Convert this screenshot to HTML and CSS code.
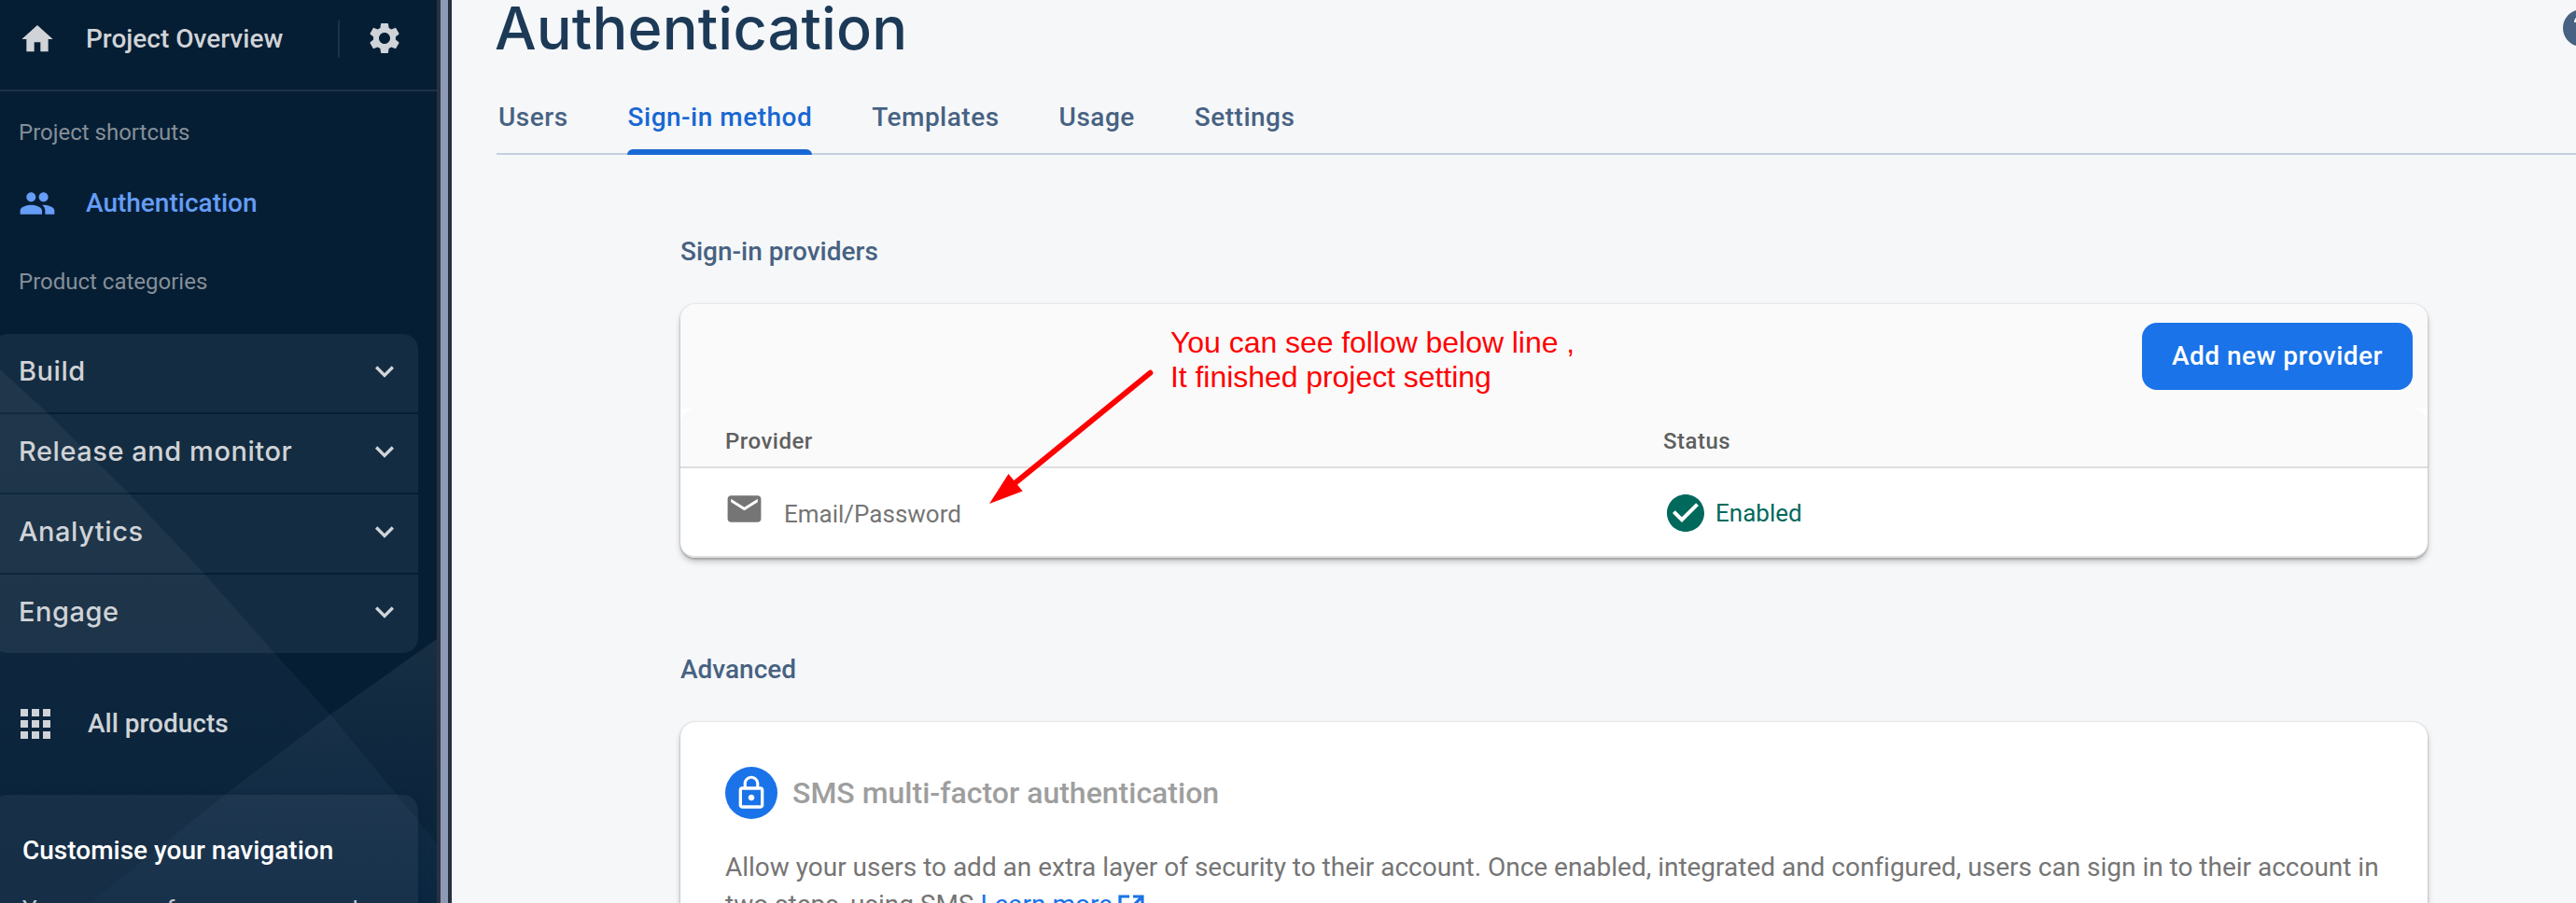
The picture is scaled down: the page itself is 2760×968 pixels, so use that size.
FILE: index.html
```html
<!DOCTYPE html>
<html lang="en-GB">
<head>
<meta charset="utf-8">
<title>Authentication</title>
<link rel="stylesheet" href="styles.css">
</head>
<body>
<div class="app">
  <aside class="sidebar">
    <svg class="facets" viewBox="0 0 468 968" aria-hidden="true">
      <defs>
        <linearGradient id="fa" x1="0" y1="396" x2="0" y2="968" gradientUnits="userSpaceOnUse"><stop offset="0" stop-color="#fff" stop-opacity=".055"/><stop offset="1" stop-color="#3d6fae" stop-opacity=".06"/></linearGradient>
        <linearGradient id="fb" x1="0" y1="685" x2="0" y2="968" gradientUnits="userSpaceOnUse"><stop offset="0" stop-color="#fff" stop-opacity=".075"/><stop offset="1" stop-color="#5b8fe0" stop-opacity=".03"/></linearGradient>
      </defs>
      <path d="M0 396L50 442L137 528L218 614L303 710L354 766L425 852L468 904V968H0z" fill="url(#fa)"/>
      <path d="M468 685L354 766L241 852L104 962L97 968H468z" fill="url(#fb)"/>
    </svg>
    <div class="overview">
      <svg class="ic" viewBox="0 0 24 24"><path d="M10 20v-6h4v6h5v-8h3L12 3 2 12h3v8z"/></svg>
      <span class="overview-name">Project Overview</span>
      <i class="vline"></i>
      <svg class="ic gear" viewBox="0 0 24 24"><path d="M19.14 12.94c.04-.3.06-.61.06-.94 0-.32-.02-.64-.07-.94l2.03-1.58c.18-.14.23-.41.12-.61l-1.92-3.32c-.12-.22-.37-.29-.59-.22l-2.39.96c-.5-.38-1.03-.7-1.62-.94l-.36-2.54c-.04-.24-.24-.41-.48-.41h-3.84c-.24 0-.43.17-.47.41l-.36 2.54c-.59.24-1.13.57-1.62.94l-2.39-.96c-.22-.08-.47 0-.59.22L2.74 8.87c-.12.21-.08.47.12.61l2.03 1.58c-.05.3-.09.63-.09.94s.02.64.07.94l-2.03 1.58c-.18.14-.23.41-.12.61l1.92 3.32c.12.22.37.29.59.22l2.39-.96c.5.38 1.03.7 1.62.94l.36 2.54c.05.24.24.41.48.41h3.84c.24 0 .44-.17.47-.41l.36-2.54c.59-.24 1.13-.56 1.62-.94l2.39.96c.22.08.47 0 .59-.22l1.92-3.32c.12-.22.07-.47-.12-.61l-2.01-1.58zM12 15.6c-1.98 0-3.6-1.62-3.6-3.6s1.62-3.6 3.6-3.6 3.6 1.62 3.6 3.6-1.62 3.6-3.6 3.6z"/></svg>
    </div>
    <div class="label first">Project shortcuts</div>
    <div class="shortcut">
      <svg class="ic" viewBox="0 0 24 24"><path d="M16 11c1.66 0 2.99-1.34 2.99-3S17.66 5 16 5c-1.66 0-3 1.34-3 3s1.34 3 3 3zm-8 0c1.66 0 2.99-1.34 2.99-3S9.66 5 8 5C6.34 5 5 6.34 5 8s1.34 3 3 3zm0 2c-2.33 0-7 1.17-7 3.5V19h14v-2.500c0-2.330-4.670-3.500-7-3.500zm8 0c-.29 0-.62.02-.97.05 1.16.84 1.970 1.970 1.970 3.450V19h6v-2.500c0-2.330-4.670-3.500-7-3.500z"/></svg>
      <span>Authentication</span>
    </div>
    <div class="label second">Product categories</div>
    <nav class="cats">
      <div class="cat"><span>Build</span><svg class="ic" viewBox="0 0 24 24"><path d="M16.590 8.590L12 13.170 7.410 8.590 6 10l6 6 6-6z"/></svg></div>
      <div class="cat"><span>Release and monitor</span><svg class="ic" viewBox="0 0 24 24"><path d="M16.590 8.590L12 13.170 7.410 8.590 6 10l6 6 6-6z"/></svg></div>
      <div class="cat"><span>Analytics</span><svg class="ic" viewBox="0 0 24 24"><path d="M16.590 8.590L12 13.170 7.410 8.590 6 10l6 6 6-6z"/></svg></div>
      <div class="cat"><span>Engage</span><svg class="ic" viewBox="0 0 24 24"><path d="M16.590 8.590L12 13.170 7.410 8.590 6 10l6 6 6-6z"/></svg></div>
    </nav>
    <div class="all">
      <svg class="apps" viewBox="0 0 32 32"><path d="M0 0h8v8H0zM12 0h8v8h-8zM24 0h8v8h-8zM0 12h8v8H0zM12 12h8v8h-8zM24 12h8v8h-8zM0 24h8v8H0zM12 24h8v8h-8zM24 24h8v8h-8z"/></svg>
      <span>All products</span>
    </div>
    <div class="promo">
      <div class="promo-title">Customise your navigation</div>
      <div class="promo-text">You can now focus your console</div>
    </div>
  </aside>
  <div class="rail"></div>
  <main class="main">
    <header class="head">
      <h1 class="title">Authentication</h1>
      <svg class="help" viewBox="0 0 24 24"><path d="M12 2C6.480 2 2 6.480 2 12s4.480 10 10 10 10-4.480 10-10S17.520 2 12 2zm1 17h-2v-2h2v2zm2.070-7.750l-.9.920C13.450 12.900 13 13.500 13 15h-2v-.5c0-1.100.45-2.100 1.170-2.830l1.240-1.260c.37-.36.59-.86.59-1.410 0-1.100-.9-2-2-2s-2 .9-2 2H8c0-2.210 1.790-4 4-4s4 1.790 4 4c0 .88-.36 1.680-.93 2.250z"/></svg>
    </header>
    <div class="tabs">
      <span class="tab">Users</span>
      <span class="tab active">Sign-in method</span>
      <span class="tab">Templates</span>
      <span class="tab">Usage</span>
      <span class="tab">Settings</span>
    </div>
    <section class="content">
      <h2 class="sec">Sign-in providers</h2>
      <div class="card providers">
        <div class="toolbar"><button class="add">Add new provider</button></div>
        <div class="row thead"><span class="col1">Provider</span><span class="col2">Status</span></div>
        <div class="row trow">
          <span class="col1 mail"><svg class="mail-ic" viewBox="0 0 24 24"><path d="M20 4H4c-1.100 0-1.990.9-1.990 2L2 18c0 1.100.9 2 2 2h16c1.100 0 2-.9 2-2V6c0-1.100-.9-2-2-2zm0 4l-8 5-8-5V6l8 5 8-5v2z"/></svg><span class="mail-t">Email/Password</span></span>
          <span class="col2 on"><svg class="ok" viewBox="0 0 24 24"><path d="M12 2C6.480 2 2 6.480 2 12s4.480 10 10 10 10-4.480 10-10S17.520 2 12 2zm-2 15l-5-5 1.410-1.410L10 14.170l7.590-7.590L19 8l-9 9z"/></svg><span class="on-t">Enabled</span></span>
        </div>
        <div class="note">You can see follow below line ,<br>It finished project setting</div>
        <svg class="arrow" viewBox="0 0 180 150"><path d="M172.300 8.700L28 126.500" stroke="#f00" stroke-width="6" stroke-linecap="round"/><path d="M0 149L20.500 117L35.700 135.500z" fill="#f00"/></svg>
      </div>
      <h2 class="sec adv">Advanced</h2>
      <div class="card mfa">
        <div class="mfa-head">
          <span class="lock"><svg viewBox="0 0 24 24"><path d="M12 17c1.100 0 2-.9 2-2s-.9-2-2-2-2 .9-2 2 .9 2 2 2zm6-9h-1V6c0-2.760-2.240-5-5-5S7 3.240 7 6v2H6c-1.100 0-2 .9-2 2v10c0 1.100.9 2 2 2h12c1.100 0 2-.9 2-2V10c0-1.100-.9-2-2-2zM8.900 6c0-1.710 1.390-3.100 3.100-3.100s3.100 1.390 3.100 3.100v2H8.900V6zM18 20H6V10h12v10z"/></svg></span>
          <span class="mfa-title">SMS multi-factor authentication</span>
        </div>
        <p class="desc">Allow your users to add an extra layer of security to their account. Once enabled, integrated and configured, users can sign in to their account in<br>two steps, using SMS <a class="link">Learn more</a><svg class="ext" viewBox="0 0 28 28"><path d="M12 2H2V26H26V16M16 2H26V12M26 2L11 17" fill="none" stroke="#1a73e8" stroke-width="3.200"/></svg></p>
      </div>
    </section>
  </main>
</div>
</body>
</html>
```
FILE: styles.css
```css
* { box-sizing: border-box; }
body { margin: 0; width: 2760px; height: 968px; overflow: hidden; font-family: Roboto, sans-serif; }
svg { display: block; flex: none; }
.app { display: flex; width: 2760px; height: 968px; overflow: hidden; background: #f6f7f9; }

.sidebar { position: relative; flex: none; width: 468px; height: 968px; overflow: hidden; background: #051e34; color: #d0d3d7; font-size: 28px; font-weight: 500; white-space: nowrap; }
.sidebar > * { position: relative; }
.sidebar > .facets { position: absolute; left: 0; top: 0; width: 468px; height: 968px; }
.ic { width: 40px; height: 40px; fill: #d0d3d7; }
.overview { display: flex; height: 98px; padding: 22px 36px 0 20px; border-bottom: 2px solid #1e3148; }
.overview-name { margin-left: 32px; width: 270px; line-height: 40px; }
.vline { width: 2px; height: 40px; background: #1e3148; }
.gear { margin: -1px 0 0 28px; }
.label { padding-left: 20px; font-size: 24px; line-height: 28px; font-weight: 400; color: #868f99; }
.first { margin-top: 30px; }
.shortcut { display: flex; gap: 32px; margin-top: 42px; padding-left: 20px; line-height: 40px; color: #669df6; }
.shortcut .ic { fill: #669df6; }
.second { margin-top: 50px; }
.cats { display: flex; flex-direction: column; gap: 2px; width: 456px; margin: 42px 0 0 -8px; border-radius: 16px; overflow: hidden; }
.cat { display: flex; justify-content: space-between; align-items: center; height: 84px; padding: 0 16px 4px 28px; background: rgba(245,235,255,.065); font-family: Inter, sans-serif; font-size: 29px; letter-spacing: .55px; }
.cat span { margin-top: -2px; }
.all { display: flex; align-items: center; gap: 40px; height: 40px; margin-top: 56px; padding-left: 22px; }
.all span { margin-top: -2px; }
.apps { width: 32px; height: 32px; fill: #d0d3d7; }
.promo { width: 456px; height: 200px; margin: 56px 0 0 -8px; padding: 46px 32px; border-radius: 16px; background: rgba(245,235,255,.06); box-shadow: 0 2px 8px rgba(0,0,0,.12); color: #fff; }
.promo-title { line-height: 28px; }
.promo-text { margin-top: 34px; font-size: 26px; line-height: 30px; font-weight: 400; color: #c3cad2; }

.rail { flex: none; width: 16px; background: #8c9ab6; border-left: 4px solid #2b3140; border-right: 4px solid #27303d; }

.main { flex: 1; min-width: 0; padding-left: 48px; }
.head { display: flex; justify-content: space-between; height: 102px; }
.title { margin: -8px 0 0 -2px; font: 500 63px/76px Inter, sans-serif; letter-spacing: .15px; color: #1c3a57; white-space: nowrap; }
.help { width: 48px; height: 48px; margin: 6px -30px 0 0; fill: #476282; }
.tabs { display: flex; gap: 64px; height: 64px; padding-left: 2px; border-bottom: 2px solid #c3d0de; }
.tab { position: relative; height: 64px; font-size: 28px; line-height: 48px; font-weight: 500; color: #476282; white-space: nowrap; letter-spacing: .5px; }
.active { color: #1967d2; }
.active::after { content: ""; position: absolute; left: -1px; right: 0; bottom: 0; height: 6px; border-radius: 6px 6px 0 0; background: #1967d2; }
.content { width: 1872px; margin: 88px 0 0 197px; }
.sec { margin: 0; font-size: 28px; line-height: 32px; font-weight: 500; color: #476282; white-space: nowrap; }
.card { position: relative; border-radius: 16px; background: #fff; box-shadow: 0 0 2px rgba(0,0,0,.2), 0 4px 6px rgba(0,0,0,.22), 0 2px 2px rgba(0,0,0,.15); }
.providers { height: 272px; margin-top: 40px; }
.toolbar { display: flex; justify-content: flex-end; height: 112px; padding: 20px 16px 0; border-radius: 16px 16px 0 0; background: #fafafa; }
.add { width: 290px; height: 72px; padding: 0; border: 0; border-radius: 16px; background: #1a73e8; color: #fff; font: 500 28px/72px Roboto, sans-serif; letter-spacing: .5px; white-space: nowrap; }
.row { display: flex; padding-left: 48px; }
.col1 { flex: none; width: 1005px; }
.thead { height: 64px; border-bottom: 2px solid #dedede; border-radius: 16px 16px 0 0; background: #fafafa; font-size: 24px; line-height: 70px; font-weight: 500; letter-spacing: .5px; color: #5f5f5f; }
.trow { height: 96px; border-bottom: 2px solid #dedede; border-radius: 0 0 16px 16px; font-size: 26px; }
.mail { display: flex; padding-top: 23px; color: #757575; line-height: 52px; }
.mail-ic { width: 43px; height: 43px; margin: -1px 0 0 -1px; fill: #757575; }
.mail-t { margin-left: 21px; }
.on { display: flex; color: #00695c; line-height: 50px; padding-top: 23px; }
.ok { width: 48px; height: 48px; margin-top: 1px; fill: #00695c; }
.on-t { margin-left: 8px; }
.note { position: absolute; left: 525px; top: 23px; color: #f00; font: 32px/37px "Liberation Sans", sans-serif; letter-spacing: -.05px; white-space: nowrap; }
.arrow { position: absolute; left: 331px; top: 65px; width: 180px; height: 150px; fill: none; }
.adv { margin-top: 104px; }
.mfa { height: 300px; margin-top: 40px; padding: 48px; }
.mfa-head { display: flex; align-items: center; gap: 16px; height: 56px; }
.lock { display: flex; align-items: center; justify-content: center; width: 56px; height: 56px; border-radius: 50%; background: #1a73e8; }
.lock svg { width: 40px; height: 40px; fill: #fff; }
.mfa-title { font-size: 32px; font-weight: 500; color: #9e9e9e; white-space: nowrap; }
.desc { margin: 32px 0 0; font-size: 28px; line-height: 40px; letter-spacing: -.012px; color: #757575; white-space: nowrap; }
.link { color: #1a73e8; }
.ext { display: inline-block; width: 28px; height: 28px; margin-left: 6px; vertical-align: -8px; }
```
